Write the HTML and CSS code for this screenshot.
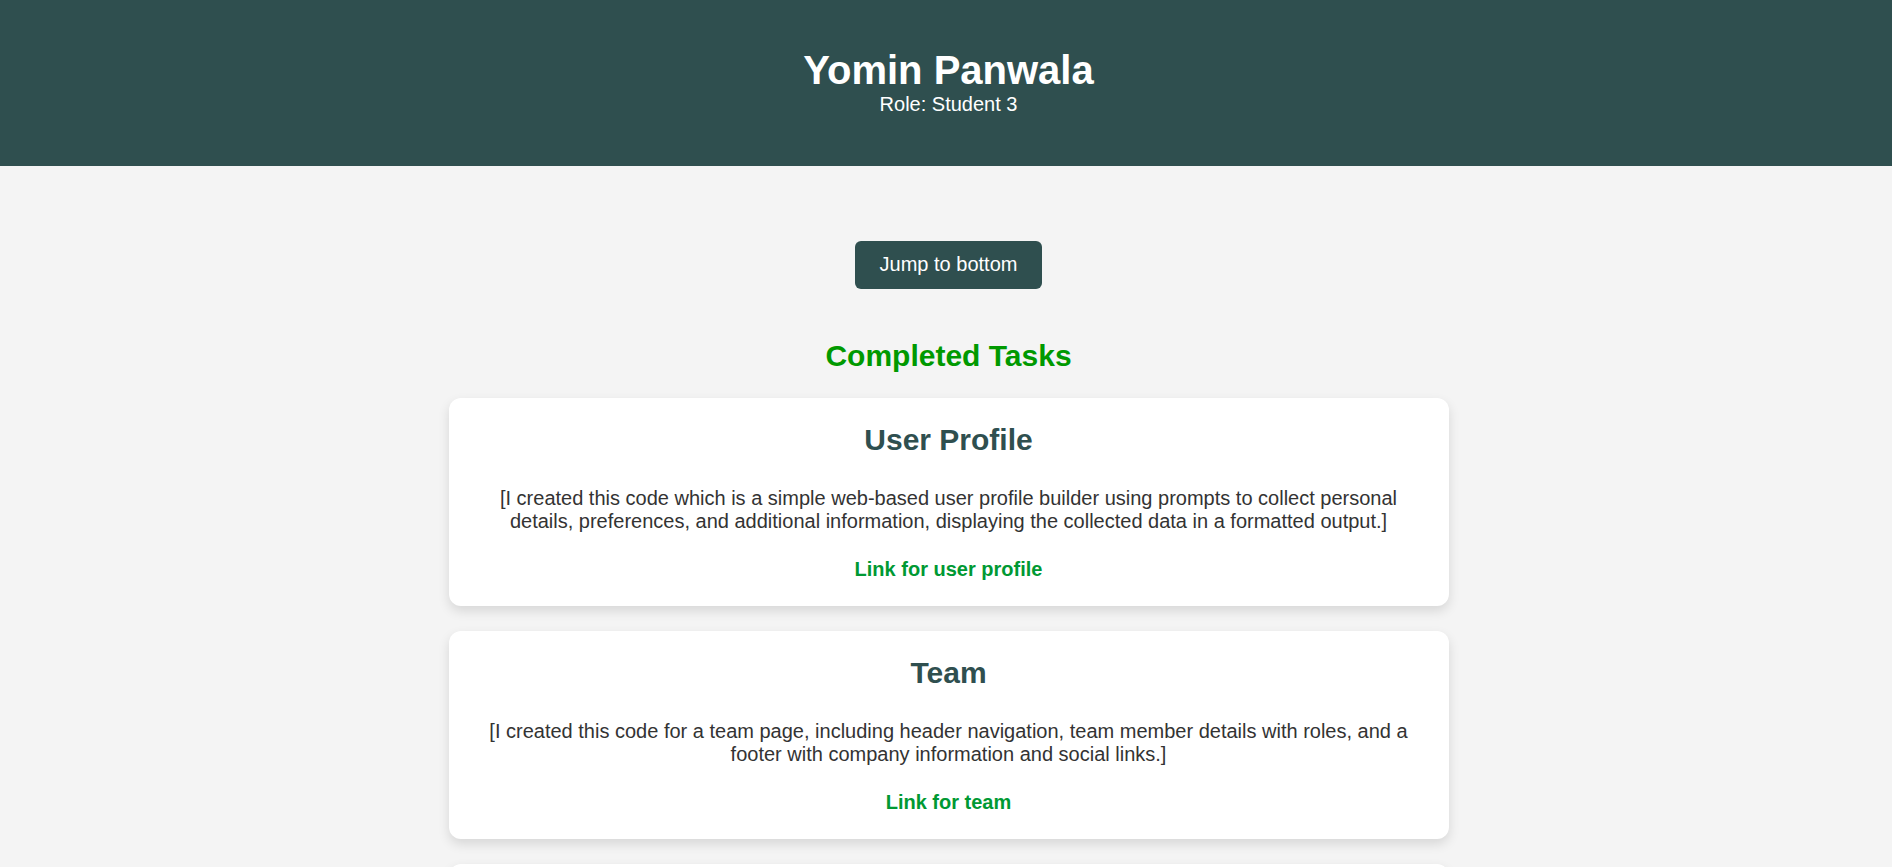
FILE: index.html
```html
<!DOCTYPE html>
<html lang="en">
<head>
<meta charset="utf-8">
<title>Yomin Panwala</title>
<link rel="stylesheet" href="styles.css">
</head>
<body>
<header class="site-header">
  <h1 class="name">Yomin Panwala</h1>
  <p class="role">Role: Student 3</p>
</header>
<main class="content">
  <a class="jump-btn" href="#bottom">Jump to bottom</a>
  <h2 class="section-title">Completed Tasks</h2>
  <div class="tasks">
    <section class="card">
      <h2 class="card-title">User Profile</h2>
      <p class="card-text">[I created this code which is a simple web-based user profile builder using prompts to collect personal details, preferences, and additional information, displaying the collected data in a formatted output.]</p>
      <a class="card-link" href="#">Link for user profile</a>
    </section>
    <section class="card">
      <h2 class="card-title">Team</h2>
      <p class="card-text">[I created this code for a team page, including header navigation, team member details with roles, and a footer with company information and social links.]</p>
      <a class="card-link" href="#">Link for team</a>
    </section>
    <section class="card">
      <h2 class="card-title">Portfolio</h2>
      <p class="card-text">[I created this code for a portfolio page.]</p>
      <a class="card-link" href="#">Link for portfolio</a>
    </section>
  </div>
  <div id="bottom"></div>
</main>
</body>
</html>
```

FILE: styles.css
```css
* {
  box-sizing: border-box;
}

html, body {
  margin: 0;
  padding: 0;
}

body {
  background: #f4f4f4;
  font-family: "Liberation Sans", Arial, sans-serif;
  color: #333333;
  overflow: hidden;
}

.site-header {
  background: #2f4f4f;
  color: #ffffff;
  text-align: center;
  padding: 48px 20px 50px 25px;
}

.name {
  margin: 0;
  font-size: 40px;
  font-weight: bold;
}

.role {
  margin: 0;
  font-size: 20px;
}

.content {
  display: flex;
  flex-direction: column;
  align-items: center;
  padding-top: 75px;
  padding-left: 5px;
}

.jump-btn {
  display: inline-block;
  background: #2f4f4f;
  color: #ffffff;
  text-decoration: none;
  font-size: 20px;
  padding: 12px 25px 13px;
  border-radius: 6px;
}

.section-title {
  margin: 50px 0 25px;
  font-size: 30px;
  color: #009900;
}

.tasks {
  width: 1000px;
  display: flex;
  flex-direction: column;
  gap: 25px;
}

.card {
  background: #ffffff;
  border-radius: 12px;
  box-shadow: 0 5px 12px rgba(0, 0, 0, 0.12);
  padding: 25px;
  text-align: center;
}

.card-title {
  margin: 0 0 30px;
  font-size: 30px;
  color: #2f4f4f;
}

.card-text {
  margin: 0 0 25px;
  font-size: 20px;
  color: #333333;
}

.card-link {
  display: block;
  font-size: 20px;
  font-weight: bold;
  color: #009933;
  text-decoration: none;
}
```
